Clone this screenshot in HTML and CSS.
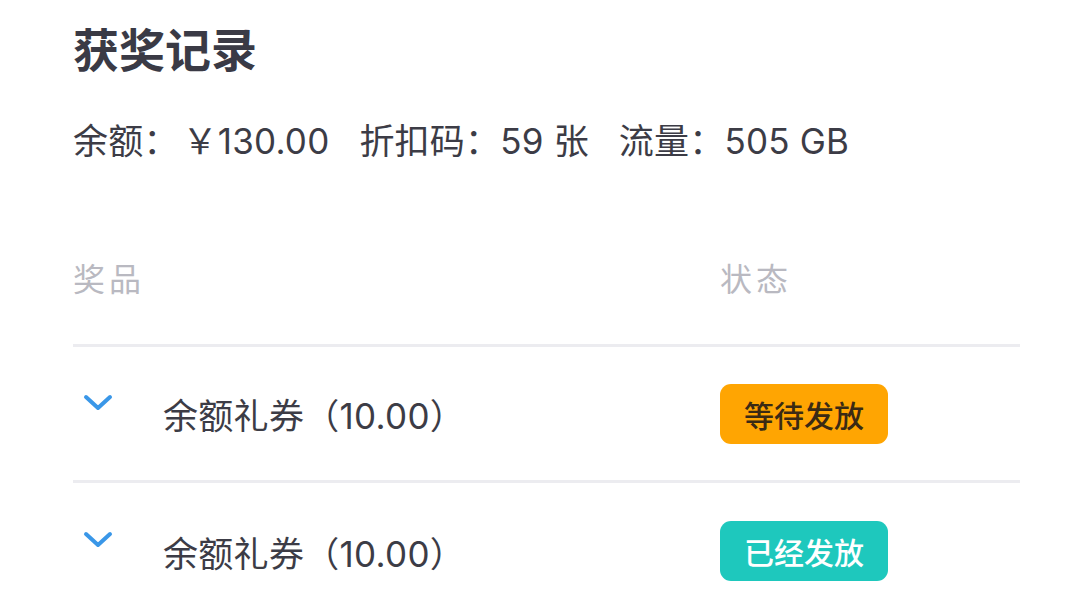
FILE: index.html
```html
<!DOCTYPE html>
<html lang="zh-CN">
<head>
<meta charset="utf-8">
<title>获奖记录</title>
<link rel="stylesheet" href="styles.css">
</head>
<body>
<div class="page">
  <h1 class="title">获奖记录</h1>
  <div class="stats">
    <span class="stat">余额：<span class="yen">￥</span>130.00</span>
    <span class="stat">折扣码：59 张</span>
    <span class="stat">流量：505 GB</span>
  </div>
  <div class="table">
    <div class="thead">
      <div class="col-prize">奖品</div>
      <div class="col-status">状态</div>
    </div>
    <div class="row">
      <div class="col-prize">
        <svg class="chev" viewBox="0 0 30 18" width="30" height="18"><path d="M3 3 L15 14 L27 3" fill="none" stroke="#3a97e8" stroke-width="4" stroke-linecap="round" stroke-linejoin="round"/></svg>
        <span class="name">余额礼券（10.00）</span>
      </div>
      <div class="col-status"><span class="badge pending">等待发放</span></div>
    </div>
    <div class="row">
      <div class="col-prize">
        <svg class="chev" viewBox="0 0 30 18" width="30" height="18"><path d="M3 3 L15 14 L27 3" fill="none" stroke="#3a97e8" stroke-width="4" stroke-linecap="round" stroke-linejoin="round"/></svg>
        <span class="name">余额礼券（10.00）</span>
      </div>
      <div class="col-status"><span class="badge done">已经发放</span></div>
    </div>
  </div>
</div>
</body>
</html>
```
FILE: styles.css
```css
* { box-sizing: border-box; }
html, body { margin: 0; padding: 0; background: #fff; }
body {
  font-family: "Inter", "Noto Sans CJK SC", "Noto Sans", sans-serif;
  color: #3c3c46;
}
.page {
  width: 1086px;
  padding: 17px 66px 0 73px;
}
.title {
  margin: 0;
  font-family: "Noto Sans CJK SC", sans-serif;
  font-size: 46px;
  line-height: 60px;
  font-weight: 700;
  color: #3a3a45;
}
.stats {
  margin-top: 42px;
  display: flex;
  gap: 30px;
  font-size: 35px;
  line-height: 44px;
  letter-spacing: 0.2px;
  color: #3c3c46;
}
.yen { margin-left: 4px; }
.table { margin-top: 87px; }
.thead {
  display: flex;
  height: 97px;
  border-bottom: 3px solid #ececf0;
  font-size: 32px;
  line-height: 44px;
  color: #b9b9c1;
  letter-spacing: 4px;
  padding-top: 8px;
}
.col-prize { flex: 1; display: flex; align-items: center; }
.col-status { width: 300px; display: flex; align-items: center; }
.thead .col-prize, .thead .col-status { align-items: flex-start; }
.row {
  display: flex;
  height: 136px;
  border-bottom: 3px solid #ececf0;
}
.row:last-child { border-bottom: none; }
.chev {
  margin-left: 10px;
  margin-right: 50px;
  align-self: center;
  margin-top: -22px;
}
.name {
  font-size: 35px;
  letter-spacing: 0.3px;
  color: #3c3c46;
}
.badge {
  display: inline-flex;
  align-items: center;
  justify-content: center;
  width: 168px;
  height: 60px;
  border-radius: 11px;
  font-family: "Noto Sans CJK SC", sans-serif;
  font-size: 30px;
  font-weight: 500;
}
.pending { background: #ffa502; color: #3a2a14; }
.done { background: #1ec8bd; color: #ffffff; }
```
